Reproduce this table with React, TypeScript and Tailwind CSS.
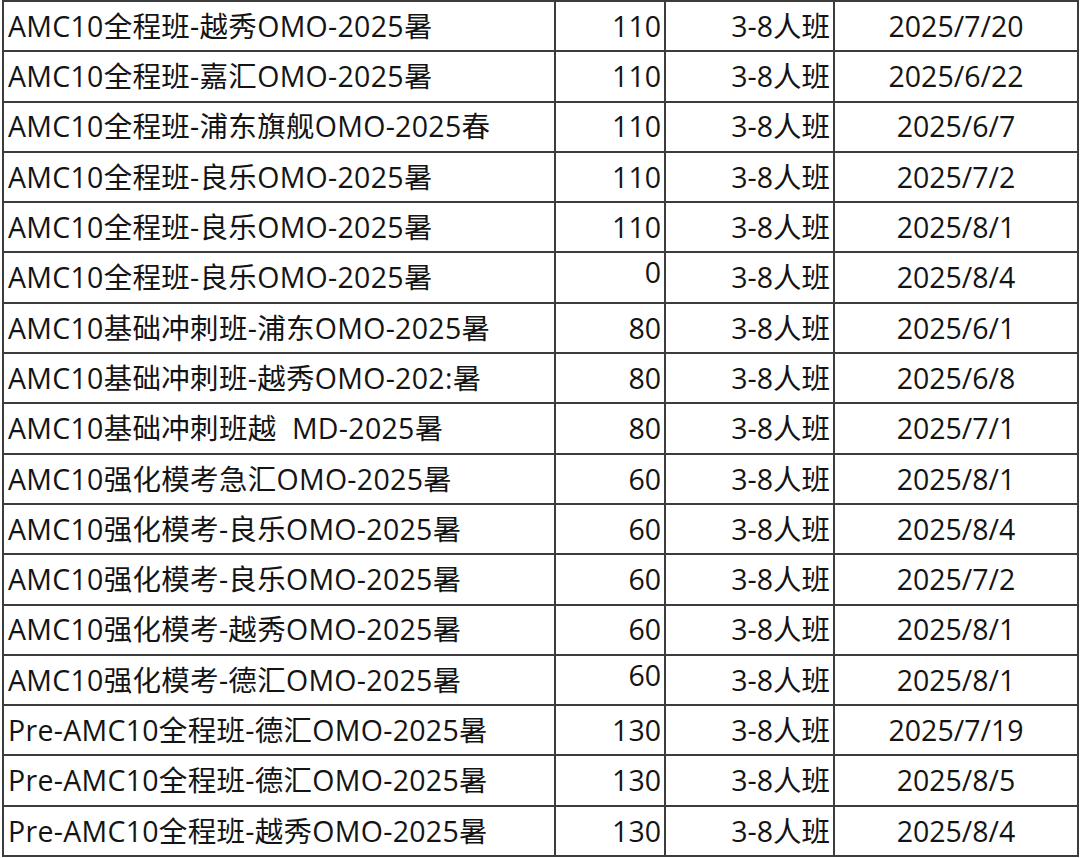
const ROWS: [string, string, string, string][] = [
  ["AMC10全程班-越秀OMO-2025暑", "110", "3-8人班", "2025/7/20"],
  ["AMC10全程班-嘉汇OMO-2025暑", "110", "3-8人班", "2025/6/22"],
  ["AMC10全程班-浦东旗舰OMO-2025春", "110", "3-8人班", "2025/6/7"],
  ["AMC10全程班-良乐OMO-2025暑", "110", "3-8人班", "2025/7/2"],
  ["AMC10全程班-良乐OMO-2025暑", "110", "3-8人班", "2025/8/1"],
  ["AMC10全程班-良乐OMO-2025暑", "0", "3-8人班", "2025/8/4"],
  ["AMC10基础冲刺班-浦东OMO-2025暑", "80", "3-8人班", "2025/6/1"],
  ["AMC10基础冲刺班-越秀OMO-202:暑", "80", "3-8人班", "2025/6/8"],
  ["AMC10基础冲刺班越  MD-2025暑", "80", "3-8人班", "2025/7/1"],
  ["AMC10强化模考急汇OMO-2025暑", "60", "3-8人班", "2025/8/1"],
  ["AMC10强化模考-良乐OMO-2025暑", "60", "3-8人班", "2025/8/4"],
  ["AMC10强化模考-良乐OMO-2025暑", "60", "3-8人班", "2025/7/2"],
  ["AMC10强化模考-越秀OMO-2025暑", "60", "3-8人班", "2025/8/1"],
  ["AMC10强化模考-德汇OMO-2025暑", "60", "3-8人班", "2025/8/1"],
  ["Pre-AMC10全程班-德汇OMO-2025暑", "130", "3-8人班", "2025/7/19"],
  ["Pre-AMC10全程班-德汇OMO-2025暑", "130", "3-8人班", "2025/8/5"],
  ["Pre-AMC10全程班-越秀OMO-2025暑", "130", "3-8人班", "2025/8/4"],
];

// a couple of numbers sit a little high in the source sheet
const RAISED = new Set([5, 13]);

export default function App() {
  return (
    <div className="w-[1080px] h-[858px] bg-white overflow-hidden">
      <div
        className="ml-[2px] w-[1077px] grid grid-cols-[550px_108px_167px_242px] auto-rows-[48.3px] gap-[2px] p-[2px] bg-[#3c3c3c] text-[28.5px] text-[#141414] leading-none"
        style={{ fontFamily: '"Open Sans", "Noto Sans CJK SC", sans-serif' }}
      >
        {ROWS.map(([name, hours, size, date], i) => (
          <Row key={i} name={name} hours={hours} size={size} date={date} raised={RAISED.has(i)} />
        ))}
      </div>
    </div>
  );
}

function Row({ name, hours, size, date, raised }: { name: string; hours: string; size: string; date: string; raised: boolean }) {
  return (
    <>
      <div className="bg-white flex items-center pl-[4px] whitespace-pre tracking-[0.3px]">{name}</div>
      <div className="bg-white flex items-center justify-end pr-[3px]">
        <span className={raised ? "-translate-y-[5px]" : ""}>{hours}</span>
      </div>
      <div className="bg-white flex items-center justify-end pr-[3px]">{size}</div>
      <div className="bg-white flex items-center justify-center">{date}</div>
    </>
  );
}
